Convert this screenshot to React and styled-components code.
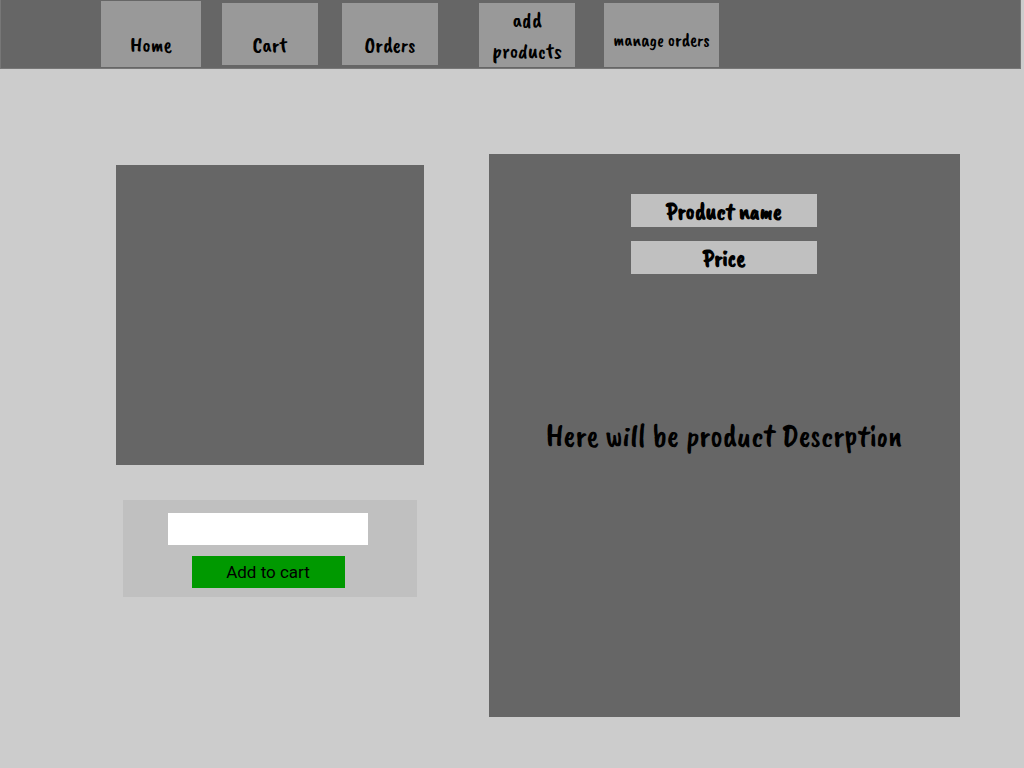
import React from "react";
import styled, { createGlobalStyle } from "styled-components";

const hand = '"Caveat Brush", Caveat, Lato, sans-serif';

const GlobalStyle = createGlobalStyle`
  *, *::before, *::after { box-sizing: border-box; }
  body {
    margin: 0;
    background: #cccccc;
    color: #000000;
    font-family: ${hand};
  }
`;

const NavBar = styled.nav`
  display: flex;
  align-items: flex-start;
  min-height: 69px;
  margin-right: 3px;
  padding-left: 100px;
  background: #666666;
  border: 1px solid #777777;
  border-top: 0;
`;

const NavLink = styled.a`
  display: flex;
  flex: none;
  justify-content: center;
  align-items: flex-end;
  width: ${(p) => p.$width}px;
  height: ${(p) => p.$height}px;
  margin-top: ${(p) => p.$top}px;
  margin-left: ${(p) => p.$gap}px;
  padding-bottom: ${(p) => p.$bottom}px;
  background: #999999;
  color: #000000;
  font-size: ${(p) => (p.$small ? 19 : 22)}px;
  font-weight: 400;
  line-height: ${(p) => (p.$tall ? 31 : 20)}px;
  text-align: center;
  text-decoration: none;
`;

const Main = styled.main`
  display: grid;
  grid-template-columns: 308fr 471fr;
  column-gap: 65px;
  align-items: start;
  padding: 85px 64px 51px 116px;
`;

const Purchase = styled.section`
  display: flex;
  flex-direction: column;
  gap: 35px;
  padding-top: 11px;
`;

const ProductImage = styled.div`
  height: 300px;
  background: #666666;
`;

const CartForm = styled.form`
  display: flex;
  flex-direction: column;
  align-items: center;
  gap: 11px;
  margin: 0 7px;
  padding: 13px 4px 9px 0;
  background: #c0c0c0;
`;

const Quantity = styled.input`
  width: 200px;
  height: 32px;
  padding: 0 8px;
  border: 0;
  border-radius: 0;
  background: #ffffff;
  font: 16px Roboto, sans-serif;
`;

const AddButton = styled.button`
  width: 153px;
  height: 32px;
  padding: 0;
  border: 0;
  background: #009900;
  color: #000000;
  font: 17px Roboto, sans-serif;
  cursor: pointer;
`;

const Details = styled.section`
  display: flex;
  flex-direction: column;
  align-items: center;
  gap: 14px;
  min-height: 563px;
  padding: 40px 17px 40px 16px;
  background: #666666;
`;

const Label = styled.p`
  width: 186px;
  margin: 0;
  padding-top: 2px;
  background: #c0c0c0;
  font-size: 24px;
  font-weight: 700;
  line-height: 31px;
  text-align: center;
`;

const Description = styled.p`
  margin: 0;
  padding-top: 128px;
  font-size: 32px;
  font-weight: 400;
  line-height: 40px;
  text-align: center;
`;

export default function App() {
  return (
    <>
      <GlobalStyle />
      <NavBar>
        <NavLink href="#home" $width={100} $height={66} $top={1} $gap={0} $bottom={12}>Home</NavLink>
        <NavLink href="#cart" $width={96} $height={62} $top={3} $gap={21} $bottom={10}>Cart</NavLink>
        <NavLink href="#orders" $width={96} $height={62} $top={3} $gap={24} $bottom={10}>Orders</NavLink>
        <NavLink href="#add-products" $width={96} $height={64} $top={3} $gap={41} $bottom={0} $tall>
          add<br />products
        </NavLink>
        <NavLink href="#manage-orders" $width={115} $height={64} $top={3} $gap={29} $bottom={17} $small>
          manage orders
        </NavLink>
      </NavBar>
      <Main>
        <Purchase>
          <ProductImage role="img" aria-label="Product" />
          <CartForm onSubmit={(e) => e.preventDefault()}>
            <Quantity type="text" name="quantity" aria-label="Quantity" />
            <AddButton type="submit">Add to cart</AddButton>
          </CartForm>
        </Purchase>
        <Details>
          <Label>Product name</Label>
          <Label>Price</Label>
          <Description>Here will be product Descrption</Description>
        </Details>
      </Main>
    </>
  );
}
